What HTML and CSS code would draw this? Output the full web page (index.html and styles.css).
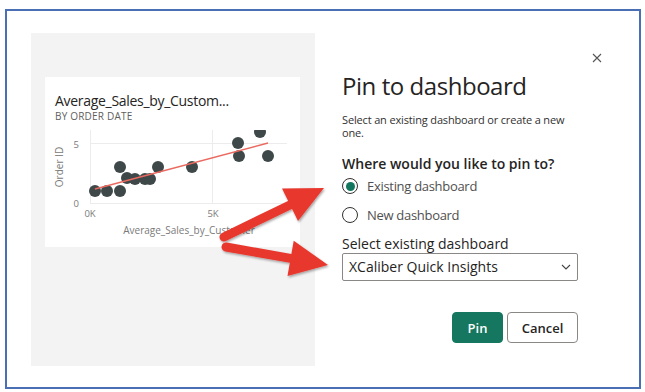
FILE: index.html
```html
<!DOCTYPE html>
<html>
<head>
<meta charset="utf-8">
<title>Pin to dashboard</title>
<link rel="stylesheet" href="styles.css">
</head>
<body>
<div class="frame">
  <div class="dialog">
    <div class="preview">
      <div class="card">
        <div class="card-title">Average_Sales_by_Custom...</div>
        <div class="card-sub">BY ORDER DATE</div>
        <svg class="chart" width="255" height="125" viewBox="0 0 255 125">
          <defs>
            <clipPath id="plot"><rect x="40" y="8" width="210" height="80"/></clipPath>
          </defs>
          <line x1="45" y1="21.5" x2="242" y2="21.5" class="grid"/>
          <line x1="45" y1="81.5" x2="242" y2="81.5" class="grid"/>
          <line x1="45.5" y1="8" x2="45.5" y2="81" class="grid"/>
          <line x1="167.5" y1="8" x2="167.5" y2="81" class="grid"/>
          <text x="34" y="25.5" class="tick" text-anchor="end">5</text>
          <text x="34" y="84.5" class="tick" text-anchor="end">0</text>
          <text x="45" y="95" class="tick" text-anchor="middle">0K</text>
          <text x="168" y="95" class="tick" text-anchor="middle">5K</text>
          <text x="0" y="0" class="axis" text-anchor="middle" transform="translate(18 45) rotate(-90)">Order ID</text>
          <text x="144" y="112" class="axis" text-anchor="middle">Average_Sales_by_Customer</text>
          <g clip-path="url(#plot)" class="dots">
            <circle cx="50" cy="69" r="6"/>
            <circle cx="62" cy="69" r="6"/>
            <circle cx="75" cy="69" r="6"/>
            <circle cx="75" cy="45" r="6"/>
            <circle cx="82" cy="56" r="6"/>
            <circle cx="90" cy="57" r="6"/>
            <circle cx="100" cy="57" r="6"/>
            <circle cx="105" cy="57" r="6"/>
            <circle cx="113" cy="45" r="6"/>
            <circle cx="147" cy="45" r="6"/>
            <circle cx="193" cy="21" r="6"/>
            <circle cx="194" cy="34" r="6"/>
            <circle cx="215" cy="10" r="6"/>
            <circle cx="223" cy="34" r="6"/>
          </g>
          <line x1="50" y1="67" x2="223" y2="21" class="trend"/>
        </svg>
      </div>
    </div>
    <div class="panel">
      <div class="close-row">
        <button class="close" aria-label="Close">
          <svg width="16" height="16" viewBox="0 0 16 16"><path d="M4 4 L12 12 M12 4 L4 12" stroke="#555" stroke-width="1.1" fill="none"/></svg>
        </button>
      </div>
      <div class="content">
        <h1 class="title">Pin to dashboard</h1>
        <p class="desc">Select an existing dashboard or create a new one.</p>
        <div class="question">Where would you like to pin to?</div>
        <div class="radios">
          <label class="radio"><span class="ring on"></span>Existing dashboard</label>
          <label class="radio"><span class="ring"></span>New dashboard</label>
        </div>
        <div class="field-label">Select existing dashboard</div>
        <div class="select">
          <span>XCaliber Quick Insights</span>
          <svg width="10" height="6" viewBox="0 0 10 6"><path d="M1 1 L5 5 L9 1" stroke="#444" stroke-width="1.1" fill="none"/></svg>
        </div>
        <div class="actions">
          <button class="btn primary">Pin</button>
          <button class="btn">Cancel</button>
        </div>
      </div>
    </div>
  </div>
  <svg class="annotations" width="645" height="392" viewBox="0 0 645 392">
    <defs>
      <filter id="sh" x="-20%" y="-20%" width="140%" height="140%">
        <feDropShadow dx="1" dy="1.5" stdDeviation="1.2" flood-color="#000" flood-opacity="0.35"/>
      </filter>
    </defs>
    <g filter="url(#sh)" fill="#e8392f">
      <line x1="224" y1="237" x2="292" y2="204" stroke="#e8392f" stroke-width="9" stroke-linecap="round"/>
      <polygon points="324,188 298,221 282,188.5"/>
      <line x1="226" y1="247" x2="292" y2="258.6" stroke="#e8392f" stroke-width="9" stroke-linecap="round"/>
      <polygon points="328,265 287.5,276.1 293.7,240.7"/>
    </g>
  </svg>
</div>
</body>
</html>
```

FILE: styles.css
```css
* { box-sizing: border-box; }

html, body {
  margin: 0;
  padding: 0;
  background: #ffffff;
}

body {
  font-family: "Open Sans", "Noto Sans", "Liberation Sans", sans-serif;
  color: #252423;
  width: 645px;
  height: 392px;
  overflow: hidden;
}

.frame {
  position: relative;
  margin: 9px 0 0 5px;
  width: 636px;
  height: 380px;
  border: 2px solid #4a6fb5;
  background: #fff;
}

.dialog {
  display: flex;
  padding: 22px 0 0 24px;
}

.preview {
  width: 284px;
  height: 333px;
  background: #f3f3f3;
  padding: 44px 0 0 14px;
  flex: none;
}

.card {
  width: 255px;
  height: 170px;
  background: #fff;
  padding-top: 15px;
  display: flex;
  flex-direction: column;
}

.card-title {
  padding-left: 10px;
  font-size: 14px;
  line-height: 18px;
  color: #252423;
  white-space: nowrap;
  letter-spacing: -0.3px;
}

.card-sub {
  padding-left: 10px;
  font-size: 10px;
  line-height: 12px;
  color: #605e5c;
  letter-spacing: 0.2px;
}

.chart { display: block; }
.chart .grid { stroke: #ececec; stroke-width: 1; }
.chart .tick { font-size: 9.5px; fill: #7a7a7a; font-family: "Open Sans", sans-serif; }
.chart .axis { font-size: 10px; fill: #7a7a7a; font-family: "Open Sans", sans-serif; }
.chart .dots circle { fill: #3e4848; }
.chart .trend { stroke: #ea6a60; stroke-width: 1.5; }

.panel {
  margin-left: 27px;
  width: 263px;
  display: flex;
  flex-direction: column;
}

.close-row {
  display: flex;
  justify-content: flex-end;
  margin-top: 17px;
  height: 16px;
}

.close {
  width: 16px;
  height: 16px;
  padding: 0;
  border: 0;
  background: transparent;
  display: block;
}
.close svg { display: block; }

.content {
  width: 236px;
  display: flex;
  flex-direction: column;
}

.title {
  margin: 5px 0 0;
  font-size: 24px;
  line-height: 30px;
  font-weight: 400;
  color: #252423;
  white-space: nowrap;
  letter-spacing: -0.45px;
}

.desc {
  margin: 12px 0 0;
  font-size: 11px;
  line-height: 13px;
  color: #323130;
  max-width: 236px;
  letter-spacing: -0.15px;
}

.question {
  margin-top: 16px;
  font-size: 14px;
  line-height: 18px;
  font-weight: 600;
  color: #252423;
  white-space: nowrap;
}

.radios {
  margin-top: 3px;
  display: flex;
  flex-direction: column;
  gap: 9px;
}

.radio {
  display: flex;
  align-items: center;
  height: 20px;
  font-size: 13px;
  line-height: 20px;
  color: #505050;
  letter-spacing: -0.3px;
}

.ring {
  width: 16px;
  height: 16px;
  border-radius: 50%;
  border: 1px solid #323130;
  margin-right: 9px;
  display: flex;
  align-items: center;
  justify-content: center;
  flex: none;
}

.ring.on::after {
  content: "";
  width: 9px;
  height: 9px;
  border-radius: 50%;
  background: #13775f;
}

.field-label {
  margin-top: 10px;
  font-size: 14px;
  line-height: 18px;
  color: #252423;
}

.select {
  height: 28px;
  border: 1px solid #8a8886;
  border-radius: 2px;
  display: flex;
  align-items: center;
  justify-content: space-between;
  padding: 0 6px 0 6px;
  font-size: 14px;
  line-height: 26px;
  color: #252423;
}
.select svg { display: block; }

.actions {
  margin-top: 31px;
  display: flex;
  justify-content: flex-end;
  gap: 4px;
}

.btn {
  height: 31px;
  border-radius: 4px;
  font-family: inherit;
  font-size: 13px;
  font-weight: 600;
  padding: 0;
  border: 1px solid #8a8886;
  background: #fff;
  color: #252423;
  width: 71px;
}

.btn.primary {
  width: 51px;
  background: #15775f;
  border-color: #15775f;
  color: #fff;
}

.annotations {
  position: absolute;
  left: -7px;
  top: -11px;
  pointer-events: none;
}
```
